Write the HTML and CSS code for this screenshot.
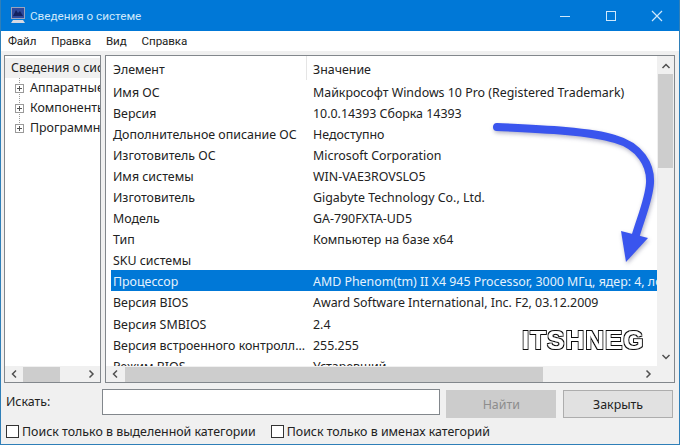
FILE: index.html
```html
<!DOCTYPE html>
<html lang="ru">
<head>
  <meta charset="UTF-8">
  <title>Сведения о системе</title>
  <link rel="stylesheet" href="styles.css">
</head>
<body>
<div class="window">
  <div class="titlebar">
    <svg class="app-icon" width="16" height="17" viewBox="0 0 16 17">
      <rect x="1.500" y="0.500" width="13" height="11" fill="#2f4a9c" stroke="#9aa3bd"/>
      <path d="M3 9l3-6 2 3 2-2 3 5z" fill="#14215f"/>
      <path d="M3 13h10l2 3H1z" fill="#d6d9e2"/>
    </svg>
    <span class="title">Сведения о системе</span>
    <div class="win-buttons">
      <svg width="12" height="12" viewBox="0 0 12 12"><path d="M1 6.500h10" stroke="#cfe8fb" fill="none"/></svg>
      <svg width="12" height="12" viewBox="0 0 12 12"><rect x="1.500" y="1.500" width="9" height="9" stroke="#cfe8fb" fill="none"/></svg>
      <svg width="12" height="12" viewBox="0 0 12 12"><path d="M1 1l10 10M11 1L1 11" stroke="#cfe8fb" fill="none" stroke-width="1.200"/></svg>
    </div>
  </div>
  <div class="menu">
    <span>Файл</span><span>Правка</span><span>Вид</span><span>Справка</span>
  </div>
  <div class="panes">
    <div class="tree">
      <div class="tree-body">
        <div class="tree-root">Сведения о системе</div>
        <div class="tree-item"><span class="plus"></span><span>Аппаратные ресурсы</span></div>
        <div class="tree-item"><span class="plus"></span><span>Компоненты</span></div>
        <div class="tree-item"><span class="plus"></span><span>Программная среда</span></div>
      </div>
      <div class="hscroll">
        <svg class="sb-arrow" width="18" height="10" viewBox="0 0 18 10"><path d="M11 1.500L7.500 5 11 8.500" stroke="#505050" stroke-width="1.500" fill="none"/></svg>
        <span class="thumb tree-thumb"></span>
        <svg class="sb-arrow" width="18" height="10" viewBox="0 0 18 10"><path d="M7.500 1.500L11 5 7.500 8.500" stroke="#505050" stroke-width="1.500" fill="none"/></svg>
      </div>
    </div>
    <div class="details">
      <div class="details-main">
        <div class="list">
          <div class="head"><span class="c1">Элемент</span><span class="c2">Значение</span></div>
          <div class="row"><span class="c1">Имя ОС</span><span class="c2">Майкрософт Windows 10 Pro (Registered Trademark)</span></div>
          <div class="row"><span class="c1">Версия</span><span class="c2">10.0.14393 Сборка 14393</span></div>
          <div class="row"><span class="c1">Дополнительное описание ОС</span><span class="c2">Недоступно</span></div>
          <div class="row"><span class="c1">Изготовитель ОС</span><span class="c2">Microsoft Corporation</span></div>
          <div class="row"><span class="c1">Имя системы</span><span class="c2">WIN-VAE3ROVSLO5</span></div>
          <div class="row"><span class="c1">Изготовитель</span><span class="c2">Gigabyte Technology Co., Ltd.</span></div>
          <div class="row"><span class="c1">Модель</span><span class="c2">GA-790FXTA-UD5</span></div>
          <div class="row"><span class="c1">Тип</span><span class="c2">Компьютер на базе x64</span></div>
          <div class="row"><span class="c1">SKU системы</span><span class="c2"></span></div>
          <div class="row selected"><span class="c1">Процессор</span><span class="c2">AMD Phenom(tm) II X4 945 Processor, 3000 МГц, ядер: 4, логических</span></div>
          <div class="row"><span class="c1">Версия BIOS</span><span class="c2">Award Software International, Inc. F2, 03.12.2009</span></div>
          <div class="row"><span class="c1">Версия SMBIOS</span><span class="c2">2.4</span></div>
          <div class="row"><span class="c1">Версия встроенного контролл...</span><span class="c2">255.255</span></div>
          <div class="row"><span class="c1">Режим BIOS</span><span class="c2">Устаревший</span></div>
        </div>
        <div class="vscroll">
          <svg width="10" height="8" viewBox="0 0 10 8"><path d="M1.500 6L5 2.500 8.500 6" stroke="#505050" stroke-width="1.500" fill="none"/></svg>
          <span class="thumb v-thumb"></span>
          <svg width="10" height="8" viewBox="0 0 10 8"><path d="M1.500 2L5 5.500 8.500 2" stroke="#505050" stroke-width="1.500" fill="none"/></svg>
        </div>
      </div>
      <div class="hscroll details-scroll">
        <svg class="sb-arrow" width="18" height="10" viewBox="0 0 18 10"><path d="M11 1.500L7.500 5 11 8.500" stroke="#505050" stroke-width="1.500" fill="none"/></svg>
        <span class="thumb details-thumb"></span>
        <svg class="sb-arrow" width="18" height="10" viewBox="0 0 18 10"><path d="M7.500 1.500L11 5 7.500 8.500" stroke="#505050" stroke-width="1.500" fill="none"/></svg>
      </div>
    </div>
  </div>
  <div class="search">
    <label class="search-label">Искать:</label>
    <div class="search-input"></div>
    <button class="btn btn-off">Найти</button>
    <button class="btn">Закрыть</button>
  </div>
  <div class="checks">
    <label class="check"><span class="box"></span>Поиск только в выделенной категории</label>
    <label class="check"><span class="box"></span>Поиск только в именах категорий</label>
  </div>
  <svg class="arrow" width="180" height="150" viewBox="0 0 180 150">
    <path d="M5 5C48 7 98 9 123 17C148 24 159 43 158 61C157 78 148 98 143 116" stroke="#3a55ee" stroke-width="8" stroke-linecap="round" fill="none"/>
    <path d="M129 109L156 116 134 140z" fill="#3a55ee"/>
  </svg>
  <svg class="defs" width="0" height="0">
    <filter id="fat" x="-10%" y="-20%" width="120%" height="140%">
      <feMorphology in="SourceAlpha" operator="dilate" radius="0.400" result="inner"/>
      <feMorphology in="SourceAlpha" operator="dilate" radius="1.300" result="outer"/>
      <feFlood flood-color="#111"/>
      <feComposite in2="outer" operator="in" result="line"/>
      <feFlood flood-color="#fff"/>
      <feComposite in2="inner" operator="in" result="fill"/>
      <feMerge>
        <feMergeNode in="line"/>
        <feMergeNode in="fill"/>
      </feMerge>
    </filter>
  </svg>
  <div class="logo">ITSHNEG</div>
</div>
</body>
</html>
```

FILE: styles.css
```css
* {
  box-sizing: border-box;
}
body {
  margin: 0;
  width: 680px;
  height: 445px;
  overflow: hidden;
  font-family: "Noto Sans", sans-serif;
  font-size: 12.4px;
  color: #222;
}
.window {
  position: relative;
  height: 445px;
  display: flex;
  flex-direction: column;
  background: #f0f0f0;
  border: 1px solid #2f7fb8;
  border-top: none;
}
.titlebar {
  height: 31px;
  display: flex;
  align-items: center;
  background: #0078d7;
  padding-left: 9px;
  color: #cfe8fb;
  flex-shrink: 0;
}
.title {
  margin-left: 4px;
  font-family: Roboto, sans-serif;
  font-size: 11.7px;
}
.win-buttons {
  margin-left: auto;
  display: flex;
  gap: 34px;
  padding-right: 16px;
}
.menu {
  height: 20px;
  background: white;
  display: flex;
  gap: 15px;
  padding-left: 7px;
  align-items: center;
  flex-shrink: 0;
  font-family: Roboto, sans-serif;
  font-size: 11.6px;
  letter-spacing: -0.1px;
}
.panes {
  display: flex;
  gap: 4px;
  padding: 4px 4px 0 3px;
  height: 332px;
  flex-shrink: 0;
}
.tree {
  width: 97px;
  border: 1px solid #82878c;
  background: white;
  display: flex;
  flex-direction: column;
  overflow: hidden;
}
.tree-body {
  flex: 1;
  overflow: hidden;
  white-space: nowrap;
}
.tree-root {
  height: 20px;
  line-height: 20px;
  margin-top: 2px;
  padding-left: 6px;
  background: #f0f0f0;
}
.tree-item {
  position: relative;
  height: 20px;
  line-height: 20px;
  padding-left: 10px;
  display: flex;
  align-items: center;
  gap: 6px;
}
.tree-item::before {
  content: "";
  position: absolute;
  left: 14px;
  top: 0;
  width: 1px;
  height: 20px;
  background: repeating-linear-gradient(#999 0 1px, transparent 1px 2px);
}
.tree-item:last-child::before {
  height: 6px;
}
.plus {
  position: relative;
  width: 9px;
  height: 9px;
  flex-shrink: 0;
  border: 1px solid #9a9a9a;
  background: white linear-gradient(#555, #555) center/5px 1px no-repeat;
}
.plus::after {
  content: "";
  position: absolute;
  left: 3px;
  top: 1px;
  width: 1px;
  height: 5px;
  background: #555;
}
.details {
  flex: 1;
  border: 1px solid #82878c;
  background: white;
  display: flex;
  flex-direction: column;
  overflow: hidden;
}
.details-main {
  flex: 1;
  display: flex;
  overflow: hidden;
}
.list {
  flex: 1;
  min-width: 0;
  overflow: hidden;
  white-space: nowrap;
  padding-left: 5px;
}
.head {
  height: 24px;
  display: flex;
  align-items: stretch;
}
.head span {
  display: flex;
  align-items: center;
  padding-top: 3px;
}
.row {
  height: 21.1px;
  display: flex;
  align-items: center;
  padding-top: 3px;
}
.c1 {
  width: 195px;
  padding-left: 2px;
  flex-shrink: 0;
}
.c2 {
  padding-left: 7px;
}
.head .c2 {
  border-left: 1px solid #e5e5e5;
  padding-left: 6px;
}
.selected {
  background: #0078d7;
  color: #e4f2fd;
}
.vscroll {
  width: 17px;
  background: #f0f0f0;
  display: flex;
  flex-direction: column;
  align-items: center;
  padding: 6px 0 5px;
  flex-shrink: 0;
}
.vscroll svg:last-child {
  margin-top: auto;
}
.v-thumb {
  width: 15px;
  height: 94px;
  margin-top: 4px;
  background: #cdcdcd;
}
.hscroll {
  height: 16px;
  background: #f0f0f0;
  display: flex;
  align-items: center;
  flex-shrink: 0;
}
.details-scroll {
  padding-right: 17px;
}
.sb-arrow {
  flex-shrink: 0;
}
.thumb {
  display: block;
}
.hscroll .thumb {
  height: 15px;
  background: #cdcdcd;
}
.tree-thumb {
  width: 37px;
  margin-right: 22px;
}
.details-thumb {
  width: 418px;
  margin-left: 1px;
  margin-right: auto;
}
.search {
  display: flex;
  align-items: flex-start;
  padding: 6px 6px 0 5px;
  height: 35px;
  flex-shrink: 0;
}
.search-label {
  width: 96px;
  line-height: 26px;
}
.search-input {
  width: 339px;
  height: 26px;
  background: white;
  border: 1px solid #82878c;
}
.btn {
  height: 28px;
  width: 110px;
  margin: 1px 0 0 6px;
  background: #e1e1e1;
  border: 1px solid #adadad;
  font: inherit;
  color: #222;
  padding: 0;
}
.btn-off {
  background: #ccc;
  border-color: #ccc;
  color: #8d8d8d;
}
.btn-off + .btn {
  margin-left: 7px;
}
.checks {
  display: flex;
  gap: 15px;
  padding-left: 5px;
  flex: 1;
  align-items: center;
}
.check {
  display: flex;
  align-items: center;
  gap: 3px;
}
.box {
  width: 13px;
  height: 13px;
  background: white;
  border: 1px solid #333;
}
.arrow {
  position: absolute;
  left: 491px;
  top: 122px;
  filter: drop-shadow(1px 2px 2px rgba(40, 40, 90, .35));
}
.defs {
  position: absolute;
}
.logo {
  position: absolute;
  left: 521px;
  top: 322px;
  font-family: "Liberation Sans", sans-serif;
  font-weight: bold;
  font-size: 26px;
  line-height: 36px;
  letter-spacing: 1px;
  color: black;
  filter: url(#fat);
}
```
